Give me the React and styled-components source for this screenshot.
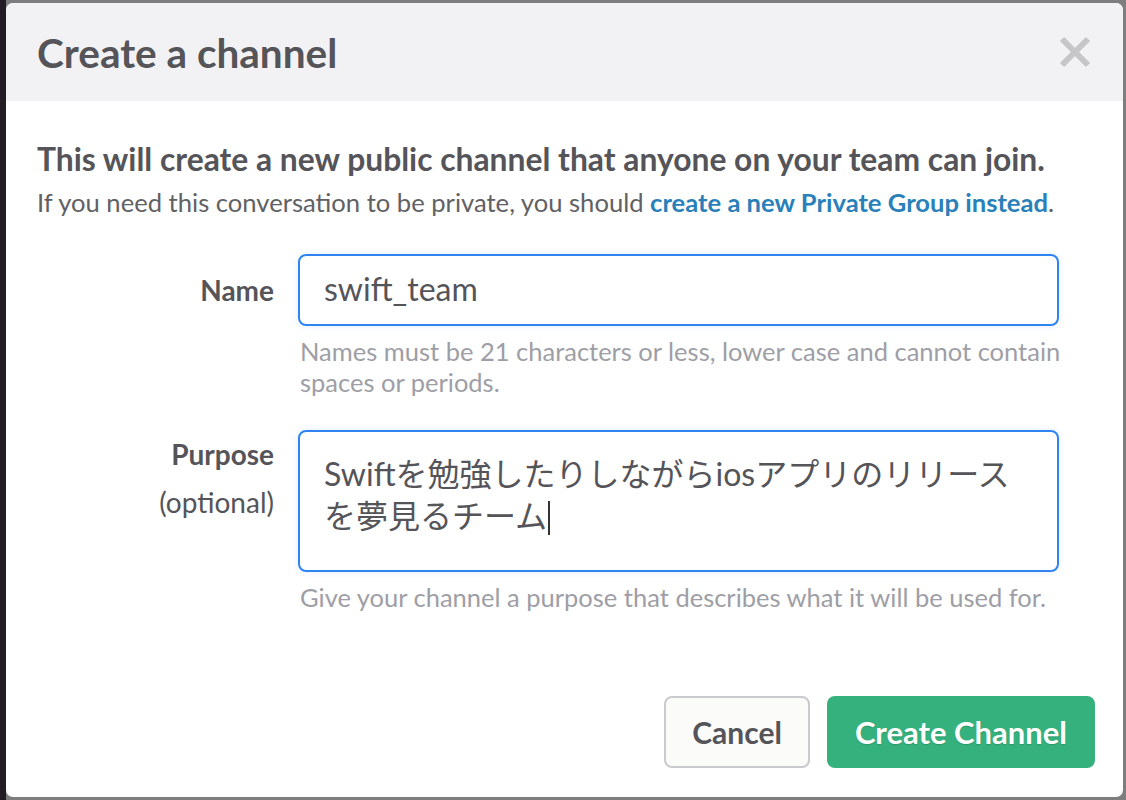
import React from "react";
import styled, { createGlobalStyle } from "styled-components";

const GlobalStyle = createGlobalStyle`
  html, body {
    margin: 0;
    padding: 0;
    width: 100%;
    height: 100%;
    overflow: hidden;
  }
  body {
    font-family: Lato, "Noto Sans CJK JP", sans-serif;
  }
`;

const Backdrop = styled.div`
  position: relative;
  display: flex;
  width: 1126px;
  height: 800px;
  background: #7e7e7e;
`;

const Sidebar = styled.div`
  width: 6px;
  background: #221d24;
`;

const Main = styled.div`
  flex: 1;
  background: #7e7e7e;
`;

const Modal = styled.div`
  position: absolute;
  left: 6px;
  top: 3px;
  width: 1117px;
  height: 794px;
  display: flex;
  flex-direction: column;
  background: #ffffff;
  border-radius: 7px;
  overflow: hidden;
`;

const Header = styled.div`
  height: 98px;
  flex-shrink: 0;
  display: flex;
  align-items: center;
  justify-content: space-between;
  padding: 0 28px 0 31px;
  background: #f2f2f4;
`;

const Title = styled.h1`
  margin: 0;
  font-size: 40.5px;
  font-weight: 700;
  color: #555459;
`;

const CloseButton = styled.button`
  display: flex;
  align-items: center;
  justify-content: center;
  width: 40px;
  height: 40px;
  padding: 0;
  border: none;
  background: none;
  cursor: pointer;
`;

const Body = styled.div`
  flex: 1;
  display: flex;
  flex-direction: column;
  padding: 41px 28px 0 31px;
`;

const Lead = styled.p`
  margin: 0;
  font-size: 31.8px;
  font-weight: 700;
  color: #555459;
  line-height: 34px;
  white-space: nowrap;
`;

const Sub = styled.p`
  margin: 10px 0 0 0;
  font-size: 25.6px;
  color: #616164;
  line-height: 32px;
  white-space: nowrap;
`;

const LinkText = styled.a`
  color: #2a80b9;
  font-weight: 700;
  text-decoration: none;
`;

const Form = styled.div`
  display: flex;
  flex-direction: column;
  gap: 32px;
  margin-top: 36px;
`;

const Row = styled.div`
  display: grid;
  grid-template-columns: 237px 761px;
  column-gap: 24px;
`;

const Label = styled.div`
  text-align: right;
  padding-top: ${({ top }) => top}px;
  font-size: 28px;
  font-weight: 700;
  color: #555459;
  line-height: 48px;
  white-space: nowrap;
`;

const Optional = styled.div`
  font-weight: 400;
`;

const Field = styled.div`
  box-sizing: border-box;
  height: ${({ h }) => h}px;
  padding: ${({ pad }) => pad};
  border: 2px solid #2f84f2;
  border-radius: 8px;
  box-shadow: 0 0 6px rgba(47, 132, 242, 0.15);
  font-size: 32px;
  color: #555459;
  line-height: 42px;
  white-space: nowrap;
`;

const Caret = styled.span`
  display: inline-block;
  width: 2px;
  height: 34px;
  margin-left: 1px;
  background: #333333;
  vertical-align: -7px;
`;

const Hint = styled.div`
  margin-top: 10px;
  padding-left: 2px;
  font-size: 25.5px;
  color: #9e9ea6;
  line-height: 31px;
  white-space: nowrap;
`;

const Footer = styled.div`
  display: flex;
  justify-content: flex-end;
  gap: 17px;
  margin-top: auto;
  padding-bottom: 29px;
`;

const Button = styled.button`
  box-sizing: border-box;
  height: 72px;
  padding: 0 ${({ primary }) => (primary ? "28px" : "26px")};
  border-radius: 8px;
  border: ${({ primary }) => (primary ? "none" : "2px solid #c9cacd")};
  background: ${({ primary }) => (primary ? "#35b17d" : "#fbfbfa")};
  color: ${({ primary }) => (primary ? "#ffffff" : "#555459")};
  font-family: Lato, sans-serif;
  font-size: ${({ primary }) => (primary ? "31px" : "30px")};
  font-weight: 700;
  text-shadow: ${({ primary }) => (primary ? "0 1px 1px rgba(0,0,0,0.15)" : "none")};
  cursor: pointer;
`;

export default function App() {
  return (
    <>
      <GlobalStyle />
      <Backdrop>
        <Sidebar />
        <Main />
        <Modal>
          <Header>
            <Title>Create a channel</Title>
            <CloseButton aria-label="close">
              <svg width="32" height="32" viewBox="0 0 32 32">
                <path d="M3 3 L29 29 M29 3 L3 29" stroke="#c6c6c8" strokeWidth="6" />
              </svg>
            </CloseButton>
          </Header>
          <Body>
            <Lead>This will create a new public channel that anyone on your team can join.</Lead>
            <Sub>
              If you need this conversation to be private, you should{" "}
              <LinkText href="#">create a new Private Group instead</LinkText>.
            </Sub>
            <Form>
              <Row>
                <Label top={12}>Name</Label>
                <div>
                  <Field h={72} pad="12px 24px">swift_team</Field>
                  <Hint>
                    Names must be 21 characters or less, lower case and cannot contain
                    <br />
                    spaces or periods.
                  </Hint>
                </div>
              </Row>
              <Row>
                <Label top={0}>
                  Purpose
                  <Optional>(optional)</Optional>
                </Label>
                <div>
                  <Field h={142} pad="21px 24px">
                    Swiftを勉強したりしながらiosアプリのリリース
                    <br />
                    を夢見るチーム
                    <Caret />
                  </Field>
                  <Hint>Give your channel a purpose that describes what it will be used for.</Hint>
                </div>
              </Row>
            </Form>
            <Footer>
              <Button>Cancel</Button>
              <Button primary>Create Channel</Button>
            </Footer>
          </Body>
        </Modal>
      </Backdrop>
    </>
  );
}
